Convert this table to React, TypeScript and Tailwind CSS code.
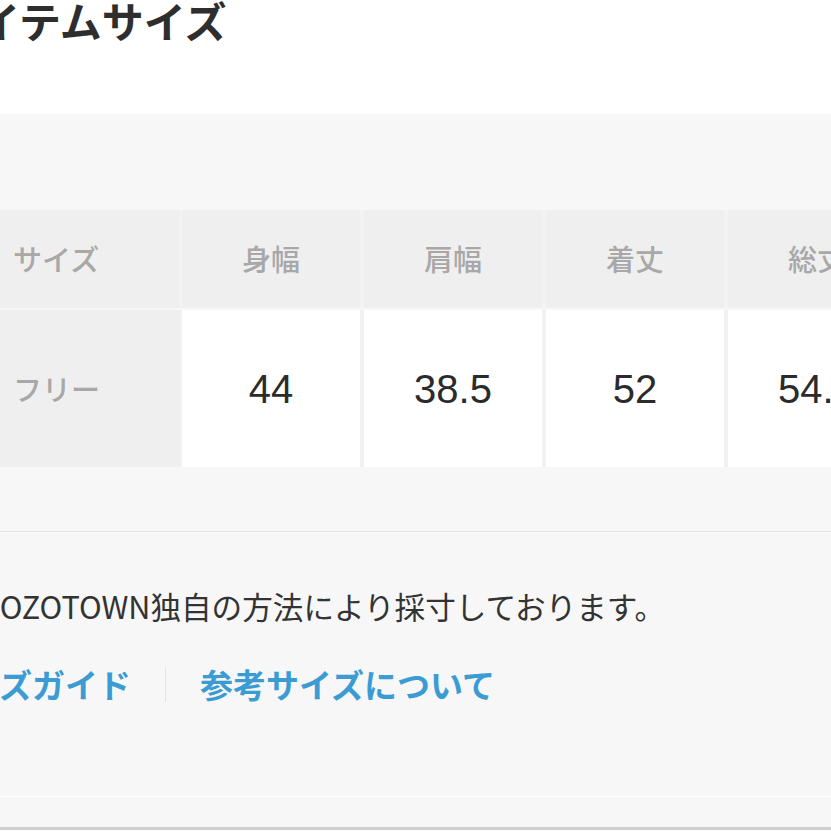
const font = { fontFamily: '"Noto Sans CJK JP", "Noto Sans", sans-serif' };

const columns = ['身幅', '肩幅', '着丈', '総丈'];
const values = ['44', '38.5', '52', '54.5'];

export default function App() {
  return (
    <div className="w-[831px] h-[831px] overflow-hidden bg-white text-[#333]" style={font}>
      <div className="ml-[-62px] w-[1000px]">
        <div className="h-[115px] bg-white">
          <h2 className="text-[42px] font-bold leading-[42px] text-[#2e2e2e] -mt-[1px]">アイテムサイズ</h2>
        </div>

        <div className="bg-[#f7f7f7] pt-[96px]">
          <div className="flex gap-[2px] h-[98px] bg-[#f3f3f3]">
            <div className="w-[242px] bg-[#efefef] flex items-center pl-[75px] text-[29px] font-medium text-[#a8a8a8]">
              サイズ
            </div>
            <div className="flex gap-[4px]">
              {columns.map((c) => (
                <div
                  key={c}
                  className="w-[178px] bg-[#efefef] flex items-center justify-center text-[29px] font-medium text-[#a8a8a8]"
                >
                  {c}
                </div>
              ))}
            </div>
          </div>

          <div className="flex gap-[2px] h-[157px] mt-[2px] bg-[#f1f1f1]">
            <div className="w-[242px] bg-[#efefef] flex items-center pl-[75px] text-[29px] font-medium text-[#a8a8a8]">
              フリー
            </div>
            <div className="flex gap-[4px]">
              {values.map((v) => (
                <div
                  key={v}
                  className="w-[178px] bg-white flex items-center justify-center text-[40px] text-[#2b2b2b]"
                  style={{ fontFamily: '"Liberation Sans", Arial, sans-serif' }}
                >
                  {v}
                </div>
              ))}
            </div>
          </div>

          <div className="mt-[64px] h-px bg-[#e6e6e6]" />

          <p className="mt-[54px] pl-[44px] text-[30.6px] leading-[40px] text-[#333]">
            ZOZOTOWN独自の方法により採寸しております。
          </p>

          <div className="mt-[38px] flex items-center text-[33px] font-bold leading-[40px] text-[#3b9cd3]">
            <a className="-ml-[4px]">サイズガイド</a>
            <span className="mx-[34px] w-px h-[35px] bg-[#e4e4e4]" />
            <a>参考サイズについて</a>
          </div>

          <div className="mt-[92px] h-px bg-white" />
          <div className="h-[30px]" />
          <div className="h-[3px] bg-[#cfcfcf]" />
        </div>
      </div>
    </div>
  );
}
